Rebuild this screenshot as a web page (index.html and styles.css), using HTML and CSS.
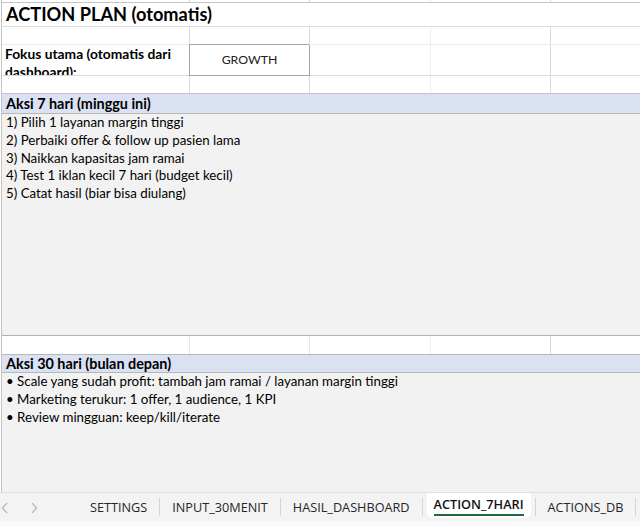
FILE: index.html
```html
<!DOCTYPE html>
<html>
<head>
<meta charset="utf-8">
<link rel="stylesheet" href="styles.css">
</head>
<body>
<div class="sheet">
  <div class="row r0"><div class="c a"></div><div class="c b"></div><div class="c cc"></div><div class="c d"></div><div class="c e"></div></div>
  <div class="row title"><div class="c full">ACTION PLAN (otomatis)</div></div>
  <div class="row r2"><div class="c a"></div><div class="c b"></div><div class="c cc"></div><div class="c d"></div><div class="c e"></div></div>
  <div class="row r3"><div class="c a bold wrap">Fokus utama (otomatis dari dashboard):</div><div class="c b growth">GROWTH</div><div class="c cc"></div><div class="c d"></div><div class="c e"></div></div>
  <div class="row r4"><div class="c a"></div><div class="c b"></div><div class="c cc"></div><div class="c d"></div><div class="c e"></div></div>
  <div class="row head h1"><div class="c full bold">Aksi 7 hari (minggu ini)</div></div>
  <div class="row merged m1">
    <div class="lines">
      <div>1) Pilih 1 layanan margin tinggi</div>
      <div>2) Perbaiki offer &amp; follow up pasien lama</div>
      <div>3) Naikkan kapasitas jam ramai</div>
      <div>4) Test 1 iklan kecil 7 hari (budget kecil)</div>
      <div>5) Catat hasil (biar bisa diulang)</div>
    </div>
  </div>
  <div class="row r7"><div class="c a"></div><div class="c b"></div><div class="c cc"></div><div class="c d"></div><div class="c e"></div></div>
  <div class="row head h2"><div class="c full bold">Aksi 30 hari (bulan depan)</div></div>
  <div class="row merged m2">
    <div class="lines">
      <div>• Scale yang sudah profit: tambah jam ramai / layanan margin tinggi</div>
      <div>• Marketing terukur: 1 offer, 1 audience, 1 KPI</div>
      <div>• Review mingguan: keep/kill/iterate</div>
    </div>
  </div>
</div>
<div class="tabs">
  <div class="nav">
    <svg class="chev" width="8" height="12" viewBox="0 0 8 12"><path d="M6 1 L1.5 6 L6 11" fill="none" stroke="#a8a8a8" stroke-width="1.1"/></svg>
    <svg class="chev" width="8" height="12" viewBox="0 0 8 12"><path d="M2 1 L6.5 6 L2 11" fill="none" stroke="#a8a8a8" stroke-width="1.1"/></svg>
  </div>
  <div class="tab">SETTINGS</div>
  <div class="sep"></div>
  <div class="tab">INPUT_30MENIT</div>
  <div class="sep"></div>
  <div class="tab">HASIL_DASHBOARD</div>
  <div class="sep"></div>
  <div class="tab active"><span class="label">ACTION_7HARI</span></div>
  <div class="sep"></div>
  <div class="tab">ACTIONS_DB</div>
  <div class="sep"></div>
</div>
<div class="status"></div>
</body>
</html>
```

FILE: styles.css
```css
* { box-sizing: border-box; }
html, body { margin: 0; padding: 0; }
body {
  width: 640px;
  height: 527px;
  overflow: hidden;
  background: #ffffff;
  font-family: Lato, "Liberation Sans", sans-serif;
  font-size: 13.3px;
  color: #000;
}
.sheet {
  margin-left: 1px;
  border-left: 1px solid #c4c4c4;
}
.row {
  display: grid;
  grid-template-columns: 188px 120px 121px 120px 1fr;
  border-bottom: 1px solid #dcdcdc;
}
.c {
  border-right: 1px solid #dadada;
  overflow: hidden;
  white-space: nowrap;
  padding-left: 3px;
}
.c.cc { border-right-color: #efefef; }
.c.e { border-right: none; }
.c.full { grid-column: 1 / -1; border-right: none; }
.bold { font-weight: 700; }

.r0 { height: 3px; border-bottom-color: #c6c6c6; }
.title { height: 24px; }
.title .full { font-size: 18.2px; font-weight: 700; line-height: 23px; padding-left: 4px; }
.r2 { height: 18px; border-bottom-color: #ececec; }
.r3 { height: 31px; }
.r3 .wrap { white-space: normal; line-height: 18px; padding-top: 0; font-size: 13.8px; }
.growth {
  text-align: center;
  line-height: 30px;
  font-size: 12.3px;
  padding-left: 0;
  color: #222;
  border-right-color: #a6a6a6;
  box-shadow: -1px -1px 0 #a6a6a6, 0 1px 0 #a6a6a6, -1px 1px 0 #a6a6a6;
}
.r4 { height: 18px; border-bottom-color: #c4c4c4; }
.head { background: #d9e1f2; }
.head .full { line-height: 19px; padding-left: 4px; font-size: 14.4px; }
.h1 { height: 20px; border-bottom-color: #b8b8b8; }
.merged { display: block; background: #f2f2f2; }
.lines { padding-left: 4px; line-height: 17.8px; white-space: nowrap; overflow: hidden; }
.m1 { height: 222px; border-bottom-color: #b0b0b0; }
.r7 { height: 19px; border-bottom-color: #b8b8b8; }
.r7 .a, .r7 .b { border-right-color: #e6e6e6; }
.h2 { height: 18px; border-bottom-color: #b8b8b8; }
.h2 .full { line-height: 17px; }
.m2 { height: 120px; border-bottom-color: #e0e0e0; }

.tabs {
  display: flex;
  align-items: center;
  height: 28px;
  background: #f3f3f3;
  font-family: "Open Sans", "Noto Sans", sans-serif;
  font-size: 12.7px;
  color: #262626;
}
.nav {
  width: 78px;
  display: flex;
  align-items: center;
  gap: 21px;
  padding-left: 1px;
  padding-top: 2px;
}
.tab {
  padding: 0 12px;
  line-height: 28px;
  white-space: nowrap;
}
.sep {
  width: 1px;
  height: 18px;
  background: #d4d4d4;
}
.tab.active {
  align-self: flex-start;
  height: 25px;
  background: #fff;
  border-radius: 0 0 6px 6px;
  margin: 0 4px;
  padding: 0 7px;
  line-height: 22px;
  color: #111;
  font-weight: 600;
}
.tab.active .label {
  display: inline-block;
  line-height: 20px;
  border-bottom: 2px solid #1e6b41;
}
.status {
  height: 6px;
  background: #fafafa;
}
```
